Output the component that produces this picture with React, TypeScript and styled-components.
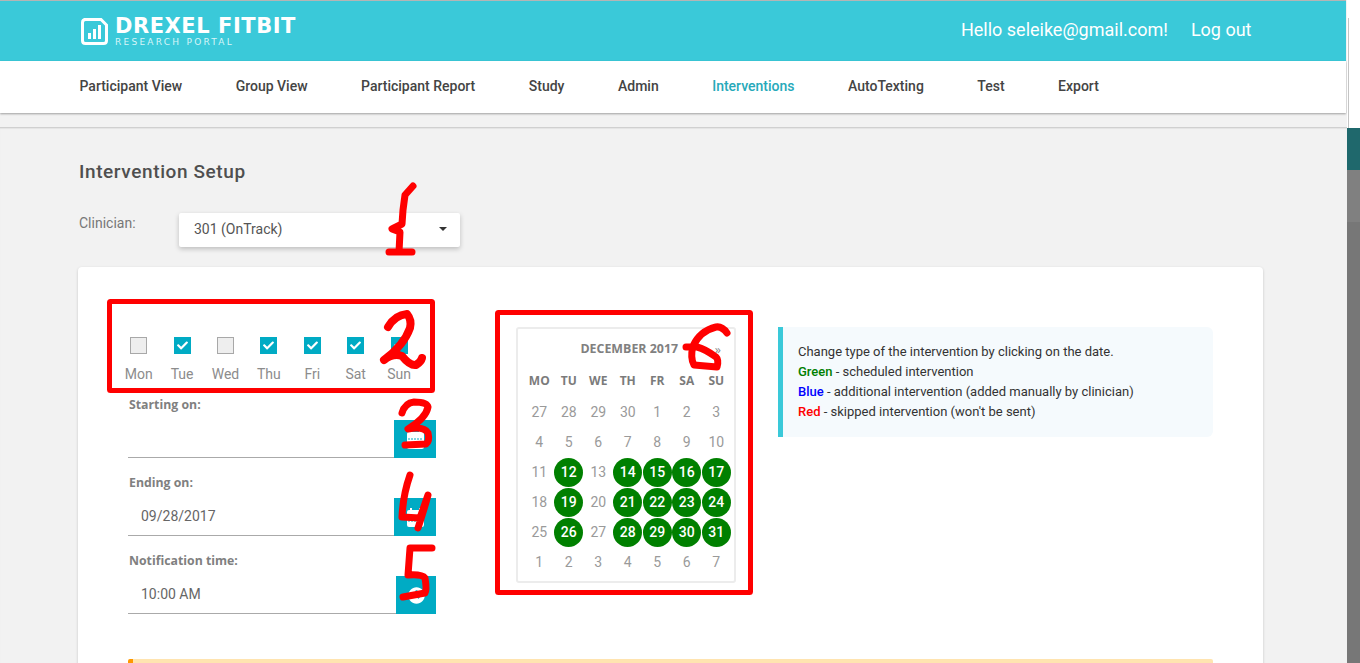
import styled, { createGlobalStyle } from "styled-components";
import { FaCheck, FaClock } from "react-icons/fa";

const GlobalStyle = createGlobalStyle`
	html, body {
		margin: 0;
		padding: 0;
		background: #fff;
	}
	* {
		box-sizing: border-box;
	}
`;

const Page = styled.div`
	width: 1360px;
	height: 663px;
	position: relative;
	overflow: hidden;
	display: flex;
	font-family: Roboto, "Liberation Sans", sans-serif;
`;

const Main = styled.div`
	width: 1347px;
	height: 663px;
	flex: none;
	background: #f2f2f2;
`;

const SideStrip = styled.div`
	flex: 1;
	display: flex;
	flex-direction: column;
`;

const SideBlock = styled.div<{ $height?: number; $color: string }>`
	height: ${(p) => (p.$height ? `${p.$height}px` : "auto")};
	flex: ${(p) => (p.$height ? "none" : "1")};
	background: ${(p) => p.$color};
`;

const SideTop = styled.div`
	height: 128px;
	flex: none;
	background: #fff;
	position: relative;

	&::before {
		content: "";
		position: absolute;
		left: 1px;
		top: 18px;
		bottom: 0;
		width: 1px;
		background: #c4c4c4;
	}
`;

const Header = styled.header`
	width: 1346px;
	height: 61px;
	border-top: 1px solid #b5b5b5;
	background: #3ac9d9;
	display: flex;
	align-items: center;
	justify-content: space-between;
	padding: 0 94.5px 0 81px;
	color: #fff;
`;

const Logo = styled.div`
	display: flex;
	align-items: center;
	gap: 7px;
	margin-top: 2px;
`;

const LogoMark = styled.svg`
	margin-top: -2px;
`;

const LogoText = styled.div`
	display: flex;
	flex-direction: column;
	font-family: "DejaVu Sans", sans-serif;
`;

const LogoTitle = styled.span`
	font-size: 21px;
	line-height: 17px;
	font-weight: 700;
	letter-spacing: 0.55px;
	white-space: nowrap;
`;

const LogoSub = styled.span`
	font-size: 9px;
	line-height: 10px;
	margin-top: 2px;
	letter-spacing: 2.25px;
	color: #d8f5f8;
	white-space: nowrap;
`;

const UserArea = styled.div`
	display: flex;
	gap: 23px;
	font-size: 18px;
	margin-top: -3px;
`;

const Nav = styled.nav`
	width: 1346px;
	height: 52px;
	background: #fff;
	display: flex;
	align-items: center;
	gap: 53.5px;
	padding: 0 0 2px 79.5px;
	box-shadow: 0 1px 2px rgba(0, 0, 0, 0.35);
	position: relative;
`;

const NavItem = styled.a<{ $active?: boolean }>`
	font-size: 14px;
	font-weight: 500;
	color: ${(p) => (p.$active ? "#26a9ba" : "#444")};
	white-space: nowrap;
`;

const Content = styled.main`
	margin-top: 14px;
	border-top: 1px solid #d0d0d0;
	box-shadow: inset 0 1px 1px rgba(0, 0, 0, 0.06);
	padding: 32px 84px 0 78px;
`;

const Title = styled.h1`
	margin: 0;
	font-size: 19px;
	line-height: 24px;
	font-weight: 500;
	letter-spacing: 0.6px;
	color: #4f4f4f;
	padding-left: 1px;
`;

const ClinicianRow = styled.div`
	margin-top: 29px;
	display: flex;
	align-items: flex-start;
`;

const ClinicianLabel = styled.label`
	width: 101px;
	padding: 0 0 0 1px;
	font-size: 14px;
	line-height: 20px;
	color: #777;
`;

const Select = styled.div`
	width: 281px;
	height: 34px;
	background: #fff;
	border-radius: 2px;
	box-shadow: 0 2px 5px rgba(0, 0, 0, 0.22);
	display: flex;
	align-items: center;
	justify-content: space-between;
	padding: 0 13px 2px 15px;
	font-size: 14px;
	color: #555;
`;

const Caret = styled.span`
	width: 0;
	height: 0;
	border-left: 4px solid transparent;
	border-right: 4px solid transparent;
	border-top: 4px solid #333;
`;

const Card = styled.section`
	margin-top: 20px;
	background: #fff;
	border-radius: 4px;
	box-shadow: 0 1px 3px rgba(0, 0, 0, 0.18);
	padding: 60px 50px 0;
`;

const Columns = styled.div`
	display: flex;
	align-items: flex-start;
`;

const LeftColumn = styled.div`
	width: 308px;
	flex: none;
	padding-top: 10px;
`;

const DaysRow = styled.div`
	display: grid;
	grid-template-columns: repeat(7, 43.4px);
	margin: 0 0 15px -11px;
`;

const Day = styled.div`
	display: flex;
	flex-direction: column;
	align-items: center;
	gap: 12px;
`;

const CheckBox = styled.span<{ $checked?: boolean }>`
	width: 17px;
	height: 17px;
	display: flex;
	align-items: center;
	justify-content: center;
	color: #fff;
	background: ${(p) => (p.$checked ? "#00abc4" : "#eeeeee")};
	border: ${(p) => (p.$checked ? "none" : "1px solid #a8a8a8")};
`;

const DayName = styled.span`
	font-size: 14px;
	line-height: 16px;
	color: #8c8c8c;
`;

const Field = styled.div`
	margin-bottom: 17px;
`;

const FieldLabel = styled.div`
	font-family: "Open Sans", sans-serif;
	font-size: 12.3px;
	line-height: 16px;
	font-weight: 700;
	color: #808080;
	padding-left: 1px;
	margin-bottom: 7px;
`;

const InputRow = styled.div`
	height: 38px;
	display: flex;
	align-items: center;
	justify-content: space-between;
	border-bottom: 1px solid #aaa;
	padding-left: 13px;
	font-size: 14px;
	color: #666;
`;

const InputValue = styled.span`
	margin-bottom: 2px;
`;

const IconButton = styled.span<{ $width: number }>`
	width: ${(p) => p.$width}px;
	height: 38px;
	margin-bottom: -1px;
	flex: none;
	background: #00abc4;
	color: #fff;
	display: flex;
	align-items: center;
	justify-content: center;
`;

const Calendar = styled.div`
	width: 220px;
	height: 256px;
	flex: none;
	margin-left: 80px;
	border: 2px solid #ececec;
	border-radius: 3px;
	padding: 10px 3px 0 6.5px;
`;

const CalendarHead = styled.div`
	height: 20px;
	position: relative;
	text-align: center;
	font-family: "Open Sans", sans-serif;
	font-size: 12.4px;
	line-height: 20px;
	font-weight: 700;
	color: #808080;
	padding-left: 3px;
`;

const NextArrow = styled.span`
	position: absolute;
	right: 10px;
	top: 1px;
	font-weight: 400;
	color: #888;
`;

const WeekRow = styled.div`
	display: grid;
	grid-template-columns: repeat(7, 1fr);
	margin: 12px 0 6px;
`;

const WeekDay = styled.span`
	font-family: "Open Sans", sans-serif;
	font-size: 12px;
	line-height: 20px;
	font-weight: 700;
	color: #7b7b7b;
	text-align: center;
`;

const DateGrid = styled.div`
	display: grid;
	grid-template-columns: repeat(7, 1fr);
	grid-auto-rows: 30px;
`;

const DateCell = styled.span<{ $scheduled?: boolean }>`
	width: 29px;
	height: 29px;
	justify-self: center;
	align-self: center;
	border-radius: 50%;
	display: flex;
	align-items: center;
	justify-content: center;
	font-size: 14px;
	font-weight: ${(p) => (p.$scheduled ? 500 : 400)};
	color: ${(p) => (p.$scheduled ? "#fff" : "#9a9a9a")};
	background: ${(p) => (p.$scheduled ? "#008000" : "transparent")};
`;

const InfoBox = styled.div`
	width: 435px;
	height: 110px;
	flex: none;
	margin-left: 42px;
	background: #f5fafd;
	border-left: 5px solid #3ac9d9;
	border-radius: 0 6px 6px 0;
	padding: 15px 15px;
	font-size: 13px;
	line-height: 20px;
	color: #333;
`;

const InfoLine = styled.div``;

const Legend = styled.b<{ $color: string }>`
	font-weight: 500;
	color: ${(p) => p.$color};
`;

const Warning = styled.div`
	margin-top: 28px;
	height: 40px;
	background: #ffe4b0;
	border-left: 5px solid #ff9800;
	border-radius: 2px;
`;

const Annotations = styled.svg`
	position: absolute;
	left: 0;
	top: 0;
	pointer-events: none;
`;

const navItems = [
	"Participant View",
	"Group View",
	"Participant Report",
	"Study",
	"Admin",
	"Interventions",
	"AutoTexting",
	"Test",
	"Export",
];

const days = [
	{ name: "Mon", on: false },
	{ name: "Tue", on: true },
	{ name: "Wed", on: false },
	{ name: "Thu", on: true },
	{ name: "Fri", on: true },
	{ name: "Sat", on: true },
	{ name: "Sun", on: true },
];

const weekDays = ["MO", "TU", "WE", "TH", "FR", "SA", "SU"];

const dates = [
	27, 28, 29, 30, 1, 2, 3, 4, 5, 6, 7, 8, 9, 10, 11, 12, 13, 14, 15, 16, 17, 18, 19, 20, 21, 22,
	23, 24, 25, 26, 27, 28, 29, 30, 31, 1, 2, 3, 4, 5, 6, 7,
];

// grid positions of the green days
const scheduled = [15, 17, 18, 19, 20, 22, 24, 25, 26, 27, 29, 31, 32, 33, 34];

function CalendarIcon() {
	return (
		<svg width="17" height="19" viewBox="0 0 17 19">
			<rect x="3" y="0" width="2" height="3" fill="#fff" />
			<rect x="12" y="0" width="2" height="3" fill="#fff" />
			<rect x="0" y="2" width="17" height="17" rx="2" fill="#fff" />
			<path d="M1 9H16" stroke="#00abc4" strokeWidth="1" strokeDasharray="2 1" />
			<path d="M1 13H16" stroke="#00abc4" strokeWidth="1" strokeDasharray="2 1" />
		</svg>
	);
}

function App() {
	return (
		<Page>
			<GlobalStyle />
			<Main>
				<Header>
					<Logo>
						<LogoMark width="27" height="27" viewBox="0 0 27 27" fill="none">
							<path
								d="M3 1.5H20L25.5 7V22.5Q25.5 25.5 22.5 25.5H4.5Q1.5 25.5 1.5 22.5V4.5Q1.5 1.5 4.5 1.5"
								stroke="#fff"
								strokeWidth="3"
							/>
							<rect x="7" y="15" width="3" height="6" fill="#fff" />
							<rect x="12" y="11" width="3" height="10" fill="#fff" />
							<rect x="17" y="7" width="3" height="14" fill="#fff" />
						</LogoMark>
						<LogoText>
							<LogoTitle>DREXEL FITBIT</LogoTitle>
							<LogoSub>RESEARCH PORTAL</LogoSub>
						</LogoText>
					</Logo>
					<UserArea>
						<span>Hello seleike@gmail.com!</span>
						<span>Log out</span>
					</UserArea>
				</Header>
				<Nav>
					{navItems.map((item) => (
						<NavItem key={item} $active={item === "Interventions"}>
							{item}
						</NavItem>
					))}
				</Nav>
				<Content>
					<Title>Intervention Setup</Title>
					<ClinicianRow>
						<ClinicianLabel>Clinician:</ClinicianLabel>
						<Select>
							301 (OnTrack)
							<Caret />
						</Select>
					</ClinicianRow>
					<Card>
						<Columns>
							<LeftColumn>
								<DaysRow>
									{days.map((d) => (
										<Day key={d.name}>
											<CheckBox $checked={d.on}>{d.on && <FaCheck size={11} />}</CheckBox>
											<DayName>{d.name}</DayName>
										</Day>
									))}
								</DaysRow>
								<Field>
									<FieldLabel>Starting on:</FieldLabel>
									<InputRow>
										<span />
										<IconButton $width={42}>
											<CalendarIcon />
										</IconButton>
									</InputRow>
								</Field>
								<Field>
									<FieldLabel>Ending on:</FieldLabel>
									<InputRow>
										<InputValue>09/28/2017</InputValue>
										<IconButton $width={42}>
											<CalendarIcon />
										</IconButton>
									</InputRow>
								</Field>
								<Field>
									<FieldLabel>Notification time:</FieldLabel>
									<InputRow>
										<InputValue>10:00 AM</InputValue>
										<IconButton $width={40}>
											<FaClock size={17} />
										</IconButton>
									</InputRow>
								</Field>
							</LeftColumn>
							<Calendar>
								<CalendarHead>
									DECEMBER 2017
									<NextArrow>»</NextArrow>
								</CalendarHead>
								<WeekRow>
									{weekDays.map((w) => (
										<WeekDay key={w}>{w}</WeekDay>
									))}
								</WeekRow>
								<DateGrid>
									{dates.map((d, i) => (
										<DateCell key={i} $scheduled={scheduled.includes(i)}>
											{d}
										</DateCell>
									))}
								</DateGrid>
							</Calendar>
							<InfoBox>
								<InfoLine>Change type of the intervention by clicking on the date.</InfoLine>
								<InfoLine>
									<Legend $color="#008000">Green</Legend> - scheduled intervention
								</InfoLine>
								<InfoLine>
									<Legend $color="#0000ff">Blue</Legend> - additional intervention (added manually by
									clinician)
								</InfoLine>
								<InfoLine>
									<Legend $color="#ff0000">Red</Legend> - skipped intervention (won't be sent)
								</InfoLine>
							</InfoBox>
						</Columns>
						<Warning />
					</Card>
				</Content>
			</Main>
			<SideStrip>
				<SideTop />
				<SideBlock $height={42} $color="#1f686c" />
				<SideBlock $height={52} $color="#808080" />
				<SideBlock $color="#777" />
			</SideStrip>
			{/* red pen marks someone drew over the screenshot */}
			<Annotations width="1360" height="663" viewBox="0 0 1360 663" fill="none">
				<g stroke="#ff0000" strokeWidth="5">
					<rect x="109.5" y="301.5" width="323" height="89" rx="1" />
					<rect x="497.5" y="312.5" width="253" height="280" rx="1" />
				</g>
				<g stroke="#ff0000" strokeLinecap="round" strokeLinejoin="round">
					<path strokeWidth="7" d="M413 186L405 195L403 210L402 224L392 229L400 232L399 252M389 252L412 252" />
					<path
						strokeWidth="8"
						d="M388 327Q395 315 407 314Q412 320 410 328Q404 345 384 360Q393 353 402 356Q410 366 416 365Q421 362 422 358"
					/>
					<path
						strokeWidth="7"
						d="M402 413Q405 403 414 402Q427 402 428 407Q426 418 408 429Q424 426 428 433Q430 441 426 444L405 445"
					/>
					<path strokeWidth="7" d="M410 475Q403 495 402 517L420 518L428 495Q424 510 418 528" />
					<path strokeWidth="7" d="M432 548L410 548L408 575Q422 574 425 578Q427 590 425 593L403 597" />
					<path
						strokeWidth="7"
						d="M727 333Q722 326 716 327Q700 331 693 346Q690 358 694 365L717 367Q719 360 716 357Q705 349 697 347L686 347"
					/>
				</g>
			</Annotations>
		</Page>
	);
}

export default App;
